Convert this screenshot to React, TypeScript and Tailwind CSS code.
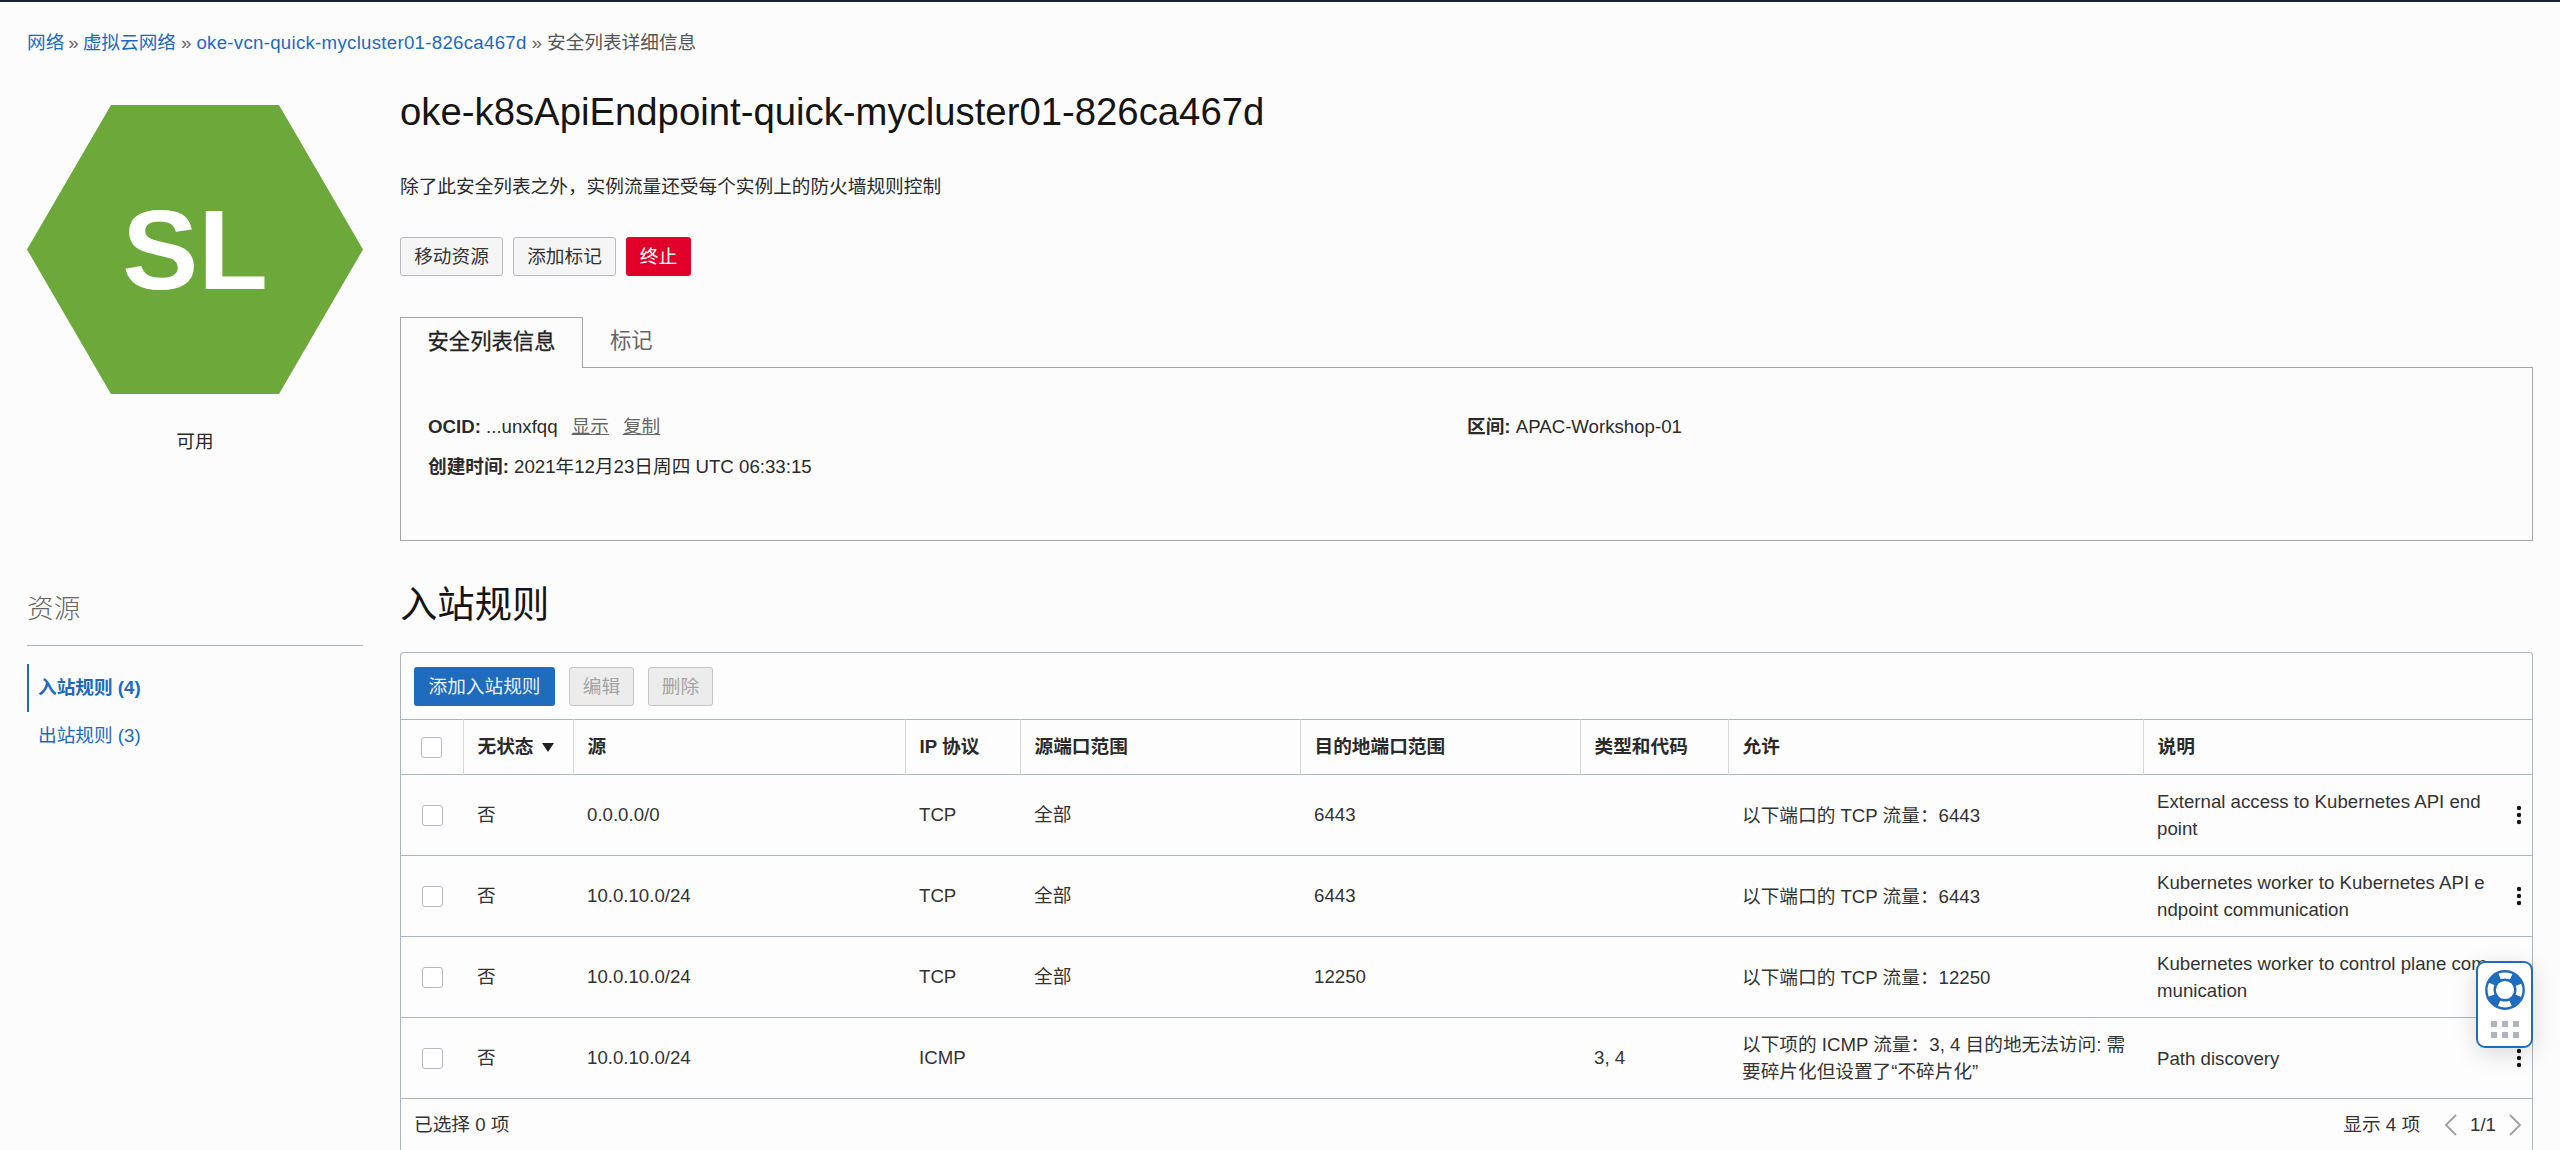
const font = '[font-family:"Liberation_Sans","Noto_Sans_CJK_SC",sans-serif]'

interface Rule {
  source: string
  protocol: string
  sourcePort: string
  destPort: string
  typeCode: string
  allow: string
  description: string
}

const rules: Rule[] = [
  { source: "0.0.0.0/0", protocol: "TCP", sourcePort: "全部", destPort: "6443", typeCode: "", allow: "以下端口的 TCP 流量：6443", description: "External access to Kubernetes API end point" },
  { source: "10.0.10.0/24", protocol: "TCP", sourcePort: "全部", destPort: "6443", typeCode: "", allow: "以下端口的 TCP 流量：6443", description: "Kubernetes worker to Kubernetes API endpoint communication" },
  { source: "10.0.10.0/24", protocol: "TCP", sourcePort: "全部", destPort: "12250", typeCode: "", allow: "以下端口的 TCP 流量：12250", description: "Kubernetes worker to control plane communication" },
  { source: "10.0.10.0/24", protocol: "ICMP", sourcePort: "", destPort: "", typeCode: "3, 4", allow: "以下项的 ICMP 流量：3, 4 目的地无法访问: 需要碎片化但设置了“不碎片化”", description: "Path discovery" },
]

const headers = ["源", "IP 协议", "源端口范围", "目的地端口范围", "类型和代码", "允许", "说明"]
const colWidths = ["w-[62px]", "w-[110px]", "w-[332px]", "w-[115px]", "w-[280px]", "w-[280px]", "w-[148px]", "w-[415px]", "w-[389px]"]

function Checkbox() {
  return <div className="mx-auto h-[21px] w-[21px] rounded-[3px] border border-[#b5b9bf] bg-white" />
}

function Kebab() {
  return (
    <svg width="6" height="20" viewBox="0 0 6 20" className="shrink-0 fill-[#161513]">
      <circle cx="3" cy="3" r="2.2" />
      <circle cx="3" cy="10" r="2.2" />
      <circle cx="3" cy="17" r="2.2" />
    </svg>
  )
}

function HelpWidget() {
  return (
    <div className="absolute left-[2476px] top-[959px] flex h-[87px] w-[57px] flex-col items-center rounded-[9px] border-2 border-[#1f6bbd] bg-white pt-[7px] shadow-[0_6px_24px_rgba(0,0,0,0.14)]">
      <svg width="40" height="40" viewBox="0 0 40 40" fill="none" stroke="#1f6bbd">
        <circle cx="20" cy="20" r="18.7" strokeWidth="2.4" />
        <circle cx="20" cy="20" r="10.3" strokeWidth="2.4" />
        <circle cx="20" cy="20" r="14.5" strokeWidth="7" strokeDasharray="11 11.78" strokeDashoffset="-5.89" />
      </svg>
      <div className="mt-[11px] grid grid-cols-3 gap-[5px]">
        {[0, 1, 2, 3, 4, 5].map((i) => (
          <div key={i} className="h-[6px] w-[6px] bg-[#aeb4bc]" />
        ))}
      </div>
    </div>
  )
}

export default function App() {
  return (
    <div className={`${font} relative h-[1150px] overflow-hidden border-t-2 border-[#1b2431] bg-[#fcfcfc] text-[18.67px] text-[#2a2a2a]`}>
      <div className="flex h-[82px] items-center pl-[27px]">
        <a className="text-[#1b6ac0]">网络</a>
        <span className="mx-[4px] text-[#666]">»</span>
        <a className="text-[#1b6ac0]">虚拟云网络</a>
        <span className="mx-[5px] text-[#666]">»</span>
        <a className="tracking-[0.28px] text-[#1b6ac0]">oke-vcn-quick-mycluster01-826ca467d</a>
        <span className="mx-[5px] text-[#666]">»</span>
        <span className="text-[#555]">安全列表详细信息</span>
      </div>

      <div className="flex gap-[37px] pl-[27px] pr-[27px]">
        <aside className="w-[336px] shrink-0">
          <div className="mt-[21px] flex h-[289px] w-[336px] items-center justify-center bg-[#6ca83a] text-[114px] font-bold leading-none text-white [clip-path:polygon(25%_0,75%_0,100%_50%,75%_100%,25%_100%,0_50%)]">
            SL
          </div>
          <div className="mt-[34px] text-center">可用</div>

          <div className="mt-[137px] border-b border-[#aeb4bc] pb-[20px] text-[26.67px] font-light leading-[32px] text-[#666]">资源</div>
          <nav className="mt-[18px]">
            <div className="flex h-[48px] items-center border-l-2 border-[#1f6bbd] pl-[9px] font-bold text-[#1b6ac0]">入站规则 (4)</div>
            <div className="flex h-[48px] items-center pl-[11px] text-[#1b6ac0]">出站规则 (3)</div>
          </nav>
        </aside>

        <main className="min-w-0 flex-1">
          <h1 className="mt-[3px] text-[38.3px] leading-[50px] text-[#161513]">oke-k8sApiEndpoint-quick-mycluster01-826ca467d</h1>
          <p className="mt-[36px] leading-[28px]">除了此安全列表之外，实例流量还受每个实例上的防火墙规则控制</p>

          <div className="mt-[36px] flex gap-[10px]">
            <button className="h-[39px] w-[103px] rounded-[3px] border border-[#b5b9bf] bg-[#f5f5f5] text-[#333]">移动资源</button>
            <button className="h-[39px] w-[103px] rounded-[3px] border border-[#b5b9bf] bg-[#f5f5f5] text-[#333]">添加标记</button>
            <button className="h-[39px] w-[65px] rounded-[3px] bg-[#e0002a] text-white">终止</button>
          </div>

          <section className="mt-[41px]">
            <div className="flex h-[51px] text-[21.33px]">
              <div className="flex w-[183px] items-center justify-center border-x border-t border-[#a6a6a6] text-[#222] [-webkit-text-stroke:0.3px_#222]">安全列表信息</div>
              <div className="flex flex-1 items-center border-b border-[#a6a6a6] pl-[27px] text-[#666]">标记</div>
            </div>
            <div className="h-[173px] border-x border-b border-[#a6a6a6] pl-[27px] pt-[45px]">
              <div className="grid grid-cols-[1039px_1fr] leading-[28px]">
                <div>
                  <b>OCID:</b> ...unxfqq
                  <a className="ml-[14px] text-[#666] underline">显示</a>
                  <a className="ml-[14px] text-[#666] underline">复制</a>
                </div>
                <div><b>区间:</b> APAC-Workshop-01</div>
              </div>
              <div className="mt-[12px] leading-[28px]"><b>创建时间:</b> 2021年12月23日周四 UTC 06:33:15</div>
            </div>
          </section>

          <h2 className="mt-[39px] text-[37.33px] leading-[50px] text-[#161513]">入站规则</h2>

          <section className="mt-[22px] rounded-t-[4px] border-x border-t border-[#aeb4bc] bg-[#fdfdfd]">
            <div className="flex h-[66px] items-start gap-[14px] pl-[13px] pt-[14px]">
              <button className="h-[39px] w-[141px] rounded-[3px] bg-[#1f6bbd] text-[#e8f0fa]">添加入站规则</button>
              <button className="h-[39px] w-[65px] rounded-[3px] border border-[#c3c6ca] bg-[#ececec] text-[#a4a4a4]">编辑</button>
              <button className="h-[39px] w-[65px] rounded-[3px] border border-[#c3c6ca] bg-[#ececec] text-[#a4a4a4]">删除</button>
            </div>

            <table className="w-[2131px] table-fixed">
              <colgroup>
                {colWidths.map((w) => (
                  <col key={w} className={w} />
                ))}
              </colgroup>
              <thead>
                <tr className="h-[55px] border-y border-[#aeb4bc] text-left font-bold">
                  <th className="border-r border-[#d6d9dd]"><Checkbox /></th>
                  <th className="border-r border-[#d6d9dd] px-[14px]">
                    <span className="flex items-center gap-[8px]">
                      无状态
                      <svg width="14" height="9" viewBox="0 0 14 9" className="fill-[#222]"><path d="M1 0h12L7 9z" /></svg>
                    </span>
                  </th>
                  {headers.map((h, i) => (
                    <th key={h} className={`px-[14px] ${i < headers.length - 1 ? "border-r border-[#d6d9dd]" : ""}`}>{h}</th>
                  ))}
                </tr>
              </thead>
              <tbody>
                {rules.map((r, i) => (
                  <tr key={i} className="h-[81px] border-b border-[#aeb4bc] text-[#333]">
                    <td><Checkbox /></td>
                    <td className="px-[14px]">否</td>
                    <td className="px-[14px]">{r.source}</td>
                    <td className="px-[14px]">{r.protocol}</td>
                    <td className="px-[14px]">{r.sourcePort}</td>
                    <td className="px-[14px]">{r.destPort}</td>
                    <td className="px-[14px]">{r.typeCode}</td>
                    <td className="px-[14px] leading-[27px]">{r.allow}</td>
                    <td className="pl-[14px] pr-[10px]">
                      <div className="flex items-center justify-between">
                        <span className="w-[336px] break-all leading-[27px]">{r.description}</span>
                        <Kebab />
                      </div>
                    </td>
                  </tr>
                ))}
              </tbody>
            </table>

            <div className="flex h-[51px] items-center justify-between pl-[13px] pr-[10px] text-[#333]">
              <span>已选择 0 项</span>
              <div className="flex items-center">
                <span>显示 4 项</span>
                <svg width="14" height="22" viewBox="0 0 14 22" fill="none" stroke="#a3a3a3" strokeWidth="2" className="ml-[24px]"><path d="M12 1 2 11l10 10" /></svg>
                <span className="mx-[12px]">1/1</span>
                <svg width="14" height="22" viewBox="0 0 14 22" fill="none" stroke="#a3a3a3" strokeWidth="2"><path d="m2 1 10 10L2 21" /></svg>
              </div>
            </div>
          </section>
        </main>
      </div>

      <HelpWidget />
    </div>
  )
}
